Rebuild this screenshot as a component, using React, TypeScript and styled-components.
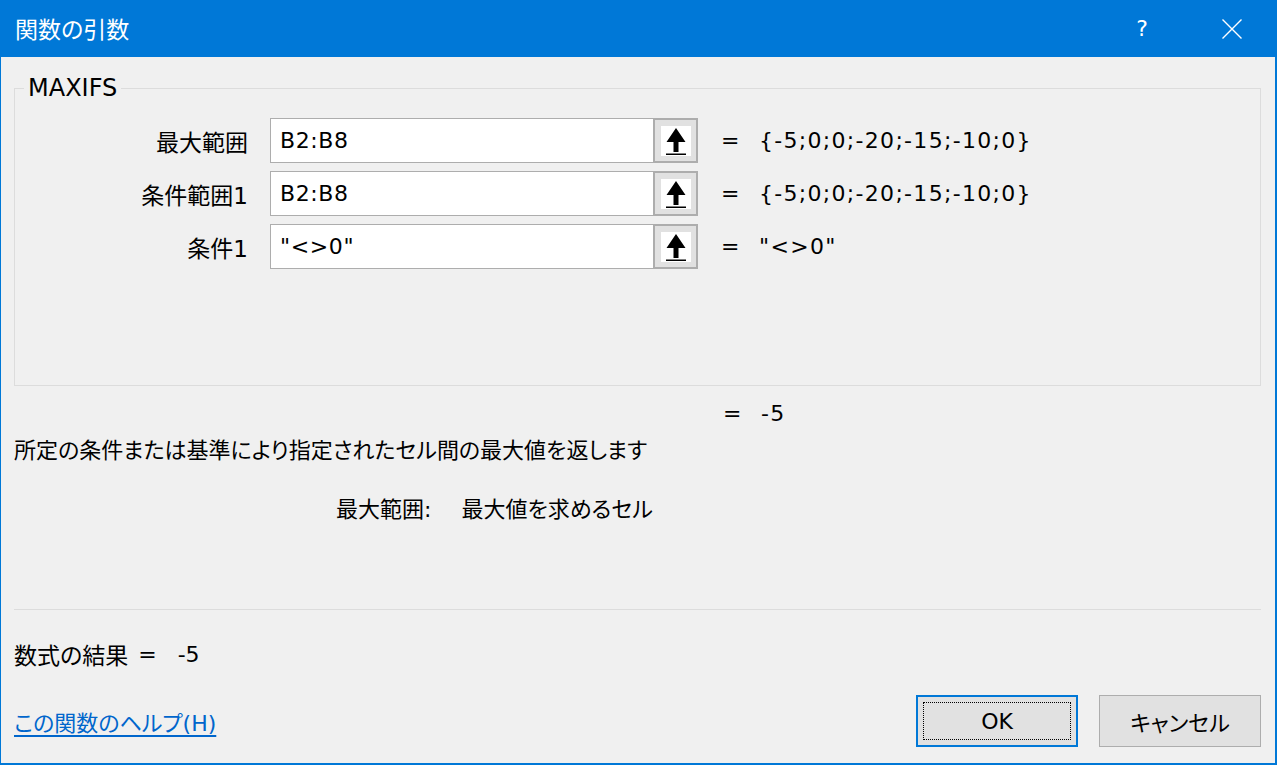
import React from "react";
import styled, { createGlobalStyle } from "styled-components";

const GlobalStyle = createGlobalStyle`
  html, body {
    margin: 0;
    padding: 0;
    background: #f0f0f0;
  }
  body {
    font-family: "DejaVu Sans", "Noto Sans CJK JP", sans-serif;
    font-feature-settings: "palt";
    color: #000;
  }
`;

interface ArgRow {
  label: string;
  input: string;
  value: string;
}

const rows: ArgRow[] = [
  { label: "最大範囲", input: "B2:B8", value: "{-5;0;0;-20;-15;-10;0}" },
  { label: "条件範囲1", input: "B2:B8", value: "{-5;0;0;-20;-15;-10;0}" },
  { label: "条件1", input: "\"<>0\"", value: "\"<>0\"" },
];

const Window = styled.div`
  width: 1277px;
  height: 765px;
  box-sizing: border-box;
  border-left: 1px solid #0078d7;
  border-right: 2px solid #0078d7;
  border-bottom: 2px solid #0078d7;
  background: #f0f0f0;
  display: flex;
  flex-direction: column;
  overflow: hidden;
`;

const TitleBar = styled.div`
  height: 57px;
  margin-left: -1px;
  margin-right: -2px;
  background: #0078d7;
  color: #fff;
  display: flex;
  align-items: center;
  padding-left: 15px;
  flex-shrink: 0;
`;

const Title = styled.div`
  font-size: 23px;
  flex: 1;
  padding-bottom: 2px;
`;

const TitleButton = styled.div`
  width: 90px;
  height: 57px;
  display: flex;
  align-items: center;
  justify-content: center;
  font-size: 22px;
`;

const Body = styled.div`
  flex: 1;
  padding: 0 14px 0 13px;
  display: flex;
  flex-direction: column;
`;

const GroupBox = styled.div`
  position: relative;
  margin-top: 31px;
  border: 1px solid #dcdcdc;
  padding: 29px 0 116px;
  display: flex;
  flex-direction: column;
  gap: 8px;
`;

const Legend = styled.div`
  position: absolute;
  top: -15px;
  left: 9px;
  padding: 0 4px;
  background: #f0f0f0;
  font-size: 24px;
  line-height: 28px;
`;

const Row = styled.div`
  display: flex;
  align-items: center;
  height: 45px;
`;

const Label = styled.div`
  width: 233px;
  margin-right: 22px;
  text-align: right;
  font-size: 23px;
`;

const Input = styled.div`
  width: 384px;
  height: 45px;
  box-sizing: border-box;
  border: 1px solid #adadad;
  background: #fff;
  display: flex;
  align-items: center;
  padding-left: 9px;
  font-size: 22px;
  letter-spacing: 0.6px;
`;

const RefButton = styled.div`
  width: 45px;
  height: 45px;
  margin-left: -1px;
  box-sizing: border-box;
  border: 2px solid #adadad;
  background: #e1e1e1;
  display: flex;
  align-items: center;
  justify-content: center;
`;

const Eq = styled.div<{ $offset?: number }>`
  width: 38px;
  margin-left: ${(p) => p.$offset ?? 0}px;
  font-size: 22px;
`;

const Value = styled.div`
  font-size: 22px;
  letter-spacing: 1.3px;
`;

const ResultLine = styled.div`
  display: flex;
  align-items: center;
  height: 30px;
  margin-top: 12px;
  padding-left: 709px;
`;

const Description = styled.div`
  margin-top: 8px;
  height: 30px;
  line-height: 30px;
  font-size: 22px;
`;

const ArgHelp = styled.div`
  margin-top: 26px;
  margin-left: 322px;
  height: 30px;
  display: flex;
  align-items: center;
  gap: 30px;
  font-size: 22px;
`;

const Separator = styled.div`
  margin-top: 87px;
  height: 1px;
  background: #dcdcdc;
`;

const FormulaResult = styled.div`
  margin-top: 29px;
  height: 30px;
  display: flex;
  align-items: center;
  font-size: 23px;
`;

const ResultPart = styled.span<{ $gap: number }>`
  margin-left: ${(p) => p.$gap}px;
  font-size: 22px;
`;

const Footer = styled.div`
  margin-top: 26px;
  height: 52px;
  display: flex;
  align-items: center;
`;

const HelpLink = styled.a`
  flex: 1;
  color: #0066cc;
  font-size: 22px;
  text-decoration: underline;
  text-underline-offset: 4px;
  cursor: pointer;
`;

const DialogButton = styled.button<{ $default?: boolean }>`
  width: 162px;
  height: 52px;
  margin-left: ${(p) => (p.$default ? 0 : 21)}px;
  box-sizing: border-box;
  background: #e1e1e1;
  border: ${(p) => (p.$default ? "2px solid #0078d7" : "1px solid #adadad")};
  padding: ${(p) => (p.$default ? "5px" : "0")};
  font-family: "DejaVu Sans", "Noto Sans CJK JP", sans-serif;
  font-feature-settings: "palt";
  font-size: 22px;
  color: #000;
  display: flex;
  align-items: stretch;
  justify-content: stretch;
`;

const FocusRect = styled.span<{ $show?: boolean }>`
  flex: 1;
  display: flex;
  align-items: center;
  justify-content: center;
  border: 1px dotted ${(p) => (p.$show ? "#000" : "transparent")};
`;

const UpArrow = () => (
  <svg width="30" height="30" viewBox="0 0 30 30">
    <rect width="30" height="30" fill="#fff" />
    <polygon points="15,2 24.5,16 17.5,16 17.5,26 12.5,26 12.5,16 5.5,16" fill="#000" />
    <rect x="5" y="27.5" width="20" height="1.5" fill="#000" />
  </svg>
);

const CloseIcon = () => (
  <svg width="20" height="20" viewBox="0 0 20 20">
    <path d="M0.5 0.5 L19.5 19.5 M19.5 0.5 L0.5 19.5" stroke="#fff" strokeWidth="1.4" />
  </svg>
);

export default function App() {
  return (
    <>
      <GlobalStyle />
      <Window>
        <TitleBar>
          <Title>関数の引数</Title>
          <TitleButton>?</TitleButton>
          <TitleButton>
            <CloseIcon />
          </TitleButton>
        </TitleBar>
        <Body>
          <GroupBox>
            <Legend>MAXIFS</Legend>
            {rows.map((r) => (
              <Row key={r.label}>
                <Label>{r.label}</Label>
                <Input>{r.input}</Input>
                <RefButton>
                  <UpArrow />
                </RefButton>
                <Eq $offset={23}>=</Eq>
                <Value>{r.value}</Value>
              </Row>
            ))}
          </GroupBox>
          <ResultLine>
            <Eq>=</Eq>
            <Value>-5</Value>
          </ResultLine>
          <Description>所定の条件または基準により指定されたセル間の最大値を返します</Description>
          <ArgHelp>
            <span>最大範囲:</span>
            <span>最大値を求めるセル</span>
          </ArgHelp>
          <Separator />
          <FormulaResult>
            数式の結果
            <ResultPart $gap={10}>=</ResultPart>
            <ResultPart $gap={21}>-5</ResultPart>
          </FormulaResult>
          <Footer>
            <HelpLink>この関数のヘルプ(H)</HelpLink>
            <DialogButton $default>
              <FocusRect $show>OK</FocusRect>
            </DialogButton>
            <DialogButton>
              <FocusRect>キャンセル</FocusRect>
            </DialogButton>
          </Footer>
        </Body>
      </Window>
    </>
  );
}
